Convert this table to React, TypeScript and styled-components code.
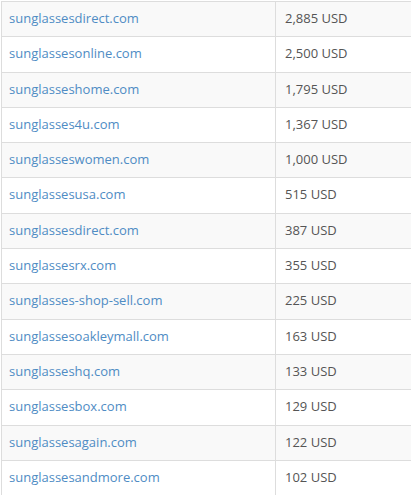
import React from "react";
import styled, { createGlobalStyle } from "styled-components";

const Global = createGlobalStyle`
  html, body { margin: 0; padding: 0; background: #fff; }
  body { font-family: "Open Sans", "Liberation Sans", sans-serif; }
`;

const Wrap = styled.div`
  padding: 1px 0 0 1px;
  width: 420px;
`;

const Table = styled.table`
  border-collapse: collapse;
  width: 100%;
  font-size: 13px;
`;

const Row = styled.tr<{ $striped: boolean }>`
  background: ${(p) => (p.$striped ? "#f9f9f9" : "#fff")};
`;

const Cell = styled.td`
  border: 1px solid #ddd;
  padding: 7px 7px 9px;
  line-height: 18.3px;
  vertical-align: top;
  text-align: left;
`;

const SiteCell = styled(Cell)`
  width: 259px;
`;

const PriceCell = styled(Cell)`
  color: #555;
  padding-left: 9px;
`;

const SiteLink = styled.a`
  color: #4f8cc4;
  text-decoration: none;
`;

const data: [string, string][] = [
  ["sunglassesdirect.com", "2,885 USD"],
  ["sunglassesonline.com", "2,500 USD"],
  ["sunglasseshome.com", "1,795 USD"],
  ["sunglasses4u.com", "1,367 USD"],
  ["sunglasseswomen.com", "1,000 USD"],
  ["sunglassesusa.com", "515 USD"],
  ["sunglassesdirect.com", "387 USD"],
  ["sunglassesrx.com", "355 USD"],
  ["sunglasses-shop-sell.com", "225 USD"],
  ["sunglassesoakleymall.com", "163 USD"],
  ["sunglasseshq.com", "133 USD"],
  ["sunglassesbox.com", "129 USD"],
  ["sunglassesagain.com", "122 USD"],
  ["sunglassesandmore.com", "102 USD"],
];

export default function App() {
  return (
    <>
      <Global />
      <Wrap>
        <Table>
          <tbody>
            {data.map(([site, price], i) => (
              <Row key={i} $striped={i % 2 === 0}>
                <SiteCell>
                  <SiteLink href="#">{site}</SiteLink>
                </SiteCell>
                <PriceCell>{price}</PriceCell>
              </Row>
            ))}
          </tbody>
        </Table>
      </Wrap>
    </>
  );
}
